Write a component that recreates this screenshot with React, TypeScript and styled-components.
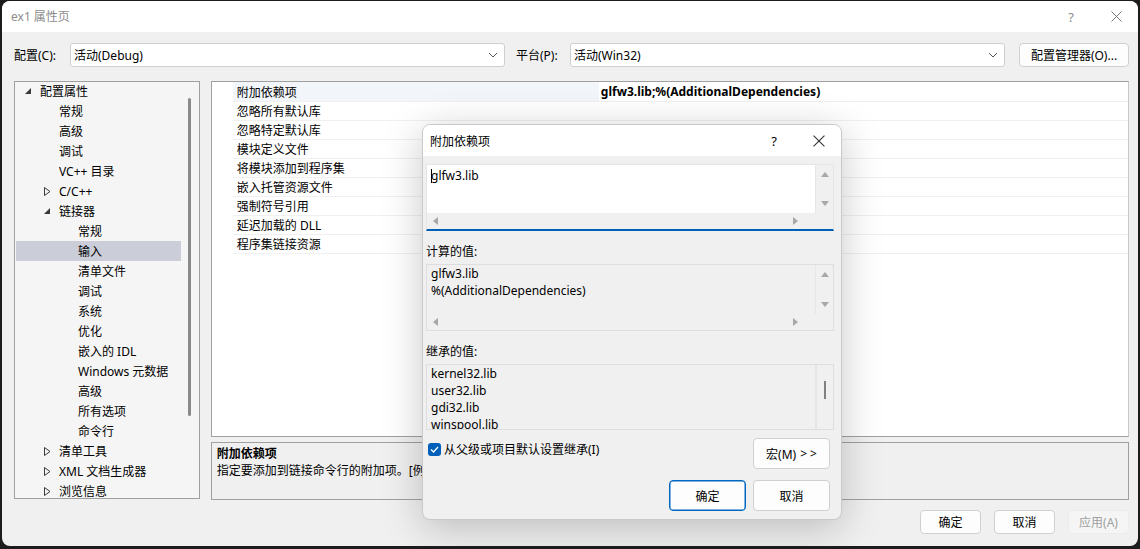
import React from "react";
import styled, { createGlobalStyle, css } from "styled-components";

const Global = createGlobalStyle`
  html, body { margin: 0; padding: 0; background: #1c1c1c; }
  body { font-family: "Segoe UI", "Noto Sans", "Noto Sans CJK SC", sans-serif; font-size: 12px; color: #000; overflow: hidden; }
  #root { width: 1140px; height: 549px; }
  * { box-sizing: border-box; }
`;

const Window = styled.div`
  position: relative;
  margin: 1px 0 0 2px;
  width: 1136px;
  height: 545px;
  background: #f0f0f0;
  border-radius: 8px;
  overflow: hidden;
  display: flex;
  flex-direction: column;
`;

const TitleBar = styled.div`
  height: 31px;
  background: #fff;
  display: flex;
  align-items: center;
  padding-left: 9px;
  flex-shrink: 0;
`;

const TitleText = styled.div`
  color: #8c8c8c;
  font-size: 12px;
  flex: 1;
  margin-top: -1px;
`;

const TitleBtn = styled.div<{ $w: number }>`
  width: ${(p) => p.$w}px;
  height: 31px;
  display: flex;
  align-items: center;
  justify-content: center;
  color: #8c8c8c;
  font-size: 13px;
`;

const Body = styled.div`
  flex: 1;
  display: flex;
  flex-direction: column;
  padding: 11px 9px 0 12px;
`;

const ConfigRow = styled.div`
  display: flex;
  align-items: center;
  height: 24px;
`;

const Label = styled.div<{ $w: number; $pl?: number }>`
  width: ${(p) => p.$w}px;
  padding-left: ${(p) => p.$pl ?? 0}px;
  flex-shrink: 0;
`;

const Select = styled.div<{ $w: number }>`
  width: ${(p) => p.$w}px;
  height: 24px;
  background: #fff;
  border: 1px solid #cfcfcf;
  border-radius: 3px;
  display: flex;
  align-items: center;
  padding-left: 3px;
  justify-content: space-between;
  padding-right: 6px;
  flex-shrink: 0;
`;

const Spacer = styled.div<{ $w: number }>`
  width: ${(p) => p.$w}px;
  flex-shrink: 0;
`;

const Button = styled.div<{ $w: number; $h?: number; $primary?: boolean; $disabled?: boolean }>`
  width: ${(p) => p.$w}px;
  height: ${(p) => p.$h ?? 24}px;
  background: ${(p) => (p.$disabled ? "#f5f5f5" : "#fdfdfd")};
  border: 1px solid ${(p) => (p.$disabled ? "#ececec" : "#d0d0d0")};
  border-radius: 4px;
  display: flex;
  align-items: center;
  justify-content: center;
  color: ${(p) => (p.$disabled ? "#a0a0a0" : "#000")};
  flex-shrink: 0;
  ${(p) =>
    p.$primary &&
    css`
      border: 1px solid #0067c0;
      box-shadow: inset 0 0 0 0.5px #0067c0;
    `}
`;

const Arrows = styled.span`
  letter-spacing: 3px;
  margin-left: 4px;
  margin-right: -3px;
`;

const Main = styled.div`
  display: flex;
  margin-top: 14px;
  gap: 11px;
`;

const TreePanel = styled.div`
  width: 186px;
  height: 418px;
  border: 1px solid #a0a0a0;
  background: #f5f5f5;
  display: flex;
  overflow: hidden;
`;

const TreeList = styled.div`
  flex: 1;
  margin-top: -1px;
  display: flex;
  flex-direction: column;
  padding-left: 1px;
`;

const TreeRow = styled.div<{ $level: number; $selected?: boolean }>`
  height: 20px;
  flex-shrink: 0;
  display: flex;
  align-items: center;
  padding-left: ${(p) => 12 + p.$level * 19}px;
  background: ${(p) => (p.$selected ? "#cbcdd9" : "transparent")};
`;

const Expander = styled.span`
  width: 15px;
  display: inline-flex;
  align-items: center;
  justify-content: flex-start;
  flex-shrink: 0;
  margin-left: -3px;
`;

const TreeScroll = styled.div`
  width: 18px;
  display: flex;
  justify-content: center;
  padding-top: 16px;
`;

const TreeThumb = styled.div`
  width: 3px;
  height: 318px;
  background: #8a8a8a;
  border-radius: 2px;
`;

const RightCol = styled.div`
  width: 919px;
  display: flex;
  flex-direction: column;
  gap: 5px;
`;

const Grid = styled.div`
  height: 356px;
  border: 1px solid #a0a0a0;
  border-right-color: #c8c8c8;
  background: #fff;
  display: flex;
  flex-direction: column;
  padding-left: 21px;
`;

const GridRow = styled.div<{ $first?: boolean }>`
  height: ${(p) => (p.$first ? 20 : 19)}px;
  flex-shrink: 0;
  display: flex;
  border-bottom: 1px solid #f0f0f0;
`;

const NameCell = styled.div<{ $active?: boolean }>`
  width: 366px;
  padding-left: 4px;
  display: flex;
  align-items: center;
  background: ${(p) => (p.$active ? "#f2f5fa" : "transparent")};
`;

const ValueCell = styled.div`
  flex: 1;
  padding-left: 2px;
  display: flex;
  align-items: center;
  font-weight: bold;
`;

const Desc = styled.div`
  height: 58px;
  border: 1px solid #a0a0a0;
  padding: 2px 5px;
  line-height: 17px;
`;

const DescTitle = styled.div`
  font-weight: bold;
`;

const Footer = styled.div`
  display: flex;
  justify-content: flex-end;
  gap: 13px;
  margin-top: 10px;
`;

/* Modal */
const Modal = styled.div`
  position: absolute;
  left: 420px;
  top: 123px;
  width: 420px;
  height: 396px;
  background: #f0f0f0;
  border: 1px solid #c9c9c9;
  border-radius: 8px;
  box-shadow: 0 8px 40px rgba(0, 0, 0, 0.22);
  overflow: hidden;
  display: flex;
  flex-direction: column;
`;

const ModalTitle = styled.div`
  height: 31px;
  background: #fff;
  display: flex;
  align-items: center;
  padding-left: 7px;
  flex-shrink: 0;
`;

const ModalTitleText = styled.div`
  flex: 1;
`;

const ModalTitleBtn = styled.div<{ $w: number }>`
  width: ${(p) => p.$w}px;
  height: 31px;
  display: flex;
  align-items: center;
  justify-content: center;
  font-size: 13px;
`;

const ModalBody = styled.div`
  padding: 8px 7px 0 3px;
  display: flex;
  flex-direction: column;
`;

const TextBox = styled.div<{ $edit?: boolean }>`
  height: 67px;
  flex-shrink: 0;
  border: 1px solid ${(p) => (p.$edit ? "#e5e5e5" : "#dedede")};
  ${(p) =>
    p.$edit &&
    css`
      border-bottom: 2px solid #005fb8;
    `}
  background: ${(p) => (p.$edit ? "#fff" : "#f0f0f0")};
  display: grid;
  grid-template-columns: 1fr 17px;
  grid-template-rows: 1fr 16px;
`;

const TextArea = styled.div<{ $bg: string; $pt: number }>`
  background: ${(p) => p.$bg};
  padding: ${(p) => p.$pt}px 4px 0;
  line-height: 17px;
  overflow: hidden;
  border-right: 1px solid #e6e6e6;
  flex: 1;
`;

const VScroll = styled.div`
  display: flex;
  flex-direction: column;
  align-items: center;
  justify-content: space-between;
  padding: 6px 0 5px;
  background: #f0f0f0;
`;

const HScroll = styled.div`
  display: flex;
  align-items: center;
  justify-content: space-between;
  padding: 0 16px 0 5px;
  background: #f0f0f0;
`;

const Corner = styled.div`
  background: #f0f0f0;
`;

const SectionLabel = styled.div`
  margin-top: 10px;
  margin-bottom: 3px;
  height: 20px;
  display: flex;
  align-items: center;
`;

const InheritBox = styled.div`
  height: 66px;
  flex-shrink: 0;
  border: 1px solid #dedede;
  display: flex;
  background: #f0f0f0;
`;

const InheritScroll = styled.div`
  width: 17px;
  border-left: 1px solid #e6e6e6;
  display: flex;
  justify-content: center;
  padding-top: 16px;
`;

const InheritThumb = styled.div`
  width: 2px;
  height: 18px;
  background: #808080;
`;

const CheckRow = styled.div`
  display: flex;
  justify-content: space-between;
  align-items: flex-start;
  margin-top: 8px;
  padding-right: 4px;
`;

const CheckLabel = styled.div`
  display: flex;
  align-items: center;
  gap: 3px;
  height: 22px;
  padding-left: 2px;
`;

const CheckBox = styled.div`
  width: 13px;
  height: 13px;
  border-radius: 3px;
  background: #005fb8;
  display: flex;
  align-items: center;
  justify-content: center;
`;

const ModalButtons = styled.div`
  display: flex;
  justify-content: flex-end;
  gap: 7px;
  margin-top: 11px;
  padding-right: 4px;
`;

const Tri = ({ dir, color = "#a8a8a8" }: { dir: "up" | "down" | "left" | "right"; color?: string }) => {
  const pts = {
    up: "0,6 4,1 8,6",
    down: "0,1 8,1 4,6",
    left: "6,0 6,8 1,4",
    right: "1,0 1,8 6,4",
  }[dir];
  return (
    <svg width="8" height="8" viewBox="0 0 8 8">
      <polygon points={pts} fill={color} />
    </svg>
  );
};

const Chevron = () => (
  <svg width="10" height="6" viewBox="0 0 10 6">
    <polyline points="1,1 5,5 9,1" fill="none" stroke="#555" strokeWidth="1" />
  </svg>
);

const CloseX = ({ size = 11, color = "#555" }: { size?: number; color?: string }) => (
  <svg width={size} height={size} viewBox="0 0 11 11">
    <path d="M0.5 0.5 L10.5 10.5 M10.5 0.5 L0.5 10.5" stroke={color} strokeWidth="1" />
  </svg>
);

const ExpandedTri = () => (
  <svg width="7" height="7" viewBox="0 0 7 7">
    <polygon points="6,0 6,6 0,6" fill="#3a3a3a" />
  </svg>
);

const CollapsedTri = () => (
  <svg width="7" height="9" viewBox="0 0 7 9">
    <polygon points="0.5,0.5 0.5,8.5 6,4.5" fill="none" stroke="#3a3a3a" strokeWidth="1" />
  </svg>
);

type TreeItem = { text: string; level: number; exp?: "open" | "closed"; sel?: boolean };

const tree: TreeItem[] = [
  { text: "配置属性", level: 0, exp: "open" },
  { text: "常规", level: 1 },
  { text: "高级", level: 1 },
  { text: "调试", level: 1 },
  { text: "VC++ 目录", level: 1 },
  { text: "C/C++", level: 1, exp: "closed" },
  { text: "链接器", level: 1, exp: "open" },
  { text: "常规", level: 2 },
  { text: "输入", level: 2, sel: true },
  { text: "清单文件", level: 2 },
  { text: "调试", level: 2 },
  { text: "系统", level: 2 },
  { text: "优化", level: 2 },
  { text: "嵌入的 IDL", level: 2 },
  { text: "Windows 元数据", level: 2 },
  { text: "高级", level: 2 },
  { text: "所有选项", level: 2 },
  { text: "命令行", level: 2 },
  { text: "清单工具", level: 1, exp: "closed" },
  { text: "XML 文档生成器", level: 1, exp: "closed" },
  { text: "浏览信息", level: 1, exp: "closed" },
];

const props = [
  "附加依赖项",
  "忽略所有默认库",
  "忽略特定默认库",
  "模块定义文件",
  "将模块添加到程序集",
  "嵌入托管资源文件",
  "强制符号引用",
  "延迟加载的 DLL",
  "程序集链接资源",
];

const Caret = styled.span`
  display: inline-block;
  width: 1px;
  height: 14px;
  background: #000;
  vertical-align: -3px;
  margin-right: -1px;
`;

export default function App() {
  return (
    <>
      <Global />
      <Window>
        <TitleBar>
          <TitleText>ex1 属性页</TitleText>
          <TitleBtn $w={46}>?</TitleBtn>
          <TitleBtn $w={44}>
            <CloseX color="#777" />
          </TitleBtn>
        </TitleBar>
        <Body>
          <ConfigRow>
            <Label $w={56}>配置(C):</Label>
            <Select $w={435}>
              <span>活动(Debug)</span>
              <Chevron />
            </Select>
            <Label $w={65} $pl={11}>平台(P):</Label>
            <Select $w={435}>
              <span>活动(Win32)</span>
              <Chevron />
            </Select>
            <Spacer $w={14} />
            <Button $w={110}>配置管理器(O)...</Button>
          </ConfigRow>
          <Main>
            <TreePanel>
              <TreeList>
                {tree.map((t, i) => (
                  <TreeRow key={i} $level={t.level} $selected={t.sel}>
                    <Expander>
                      {t.exp === "open" ? <ExpandedTri /> : t.exp === "closed" ? <CollapsedTri /> : null}
                    </Expander>
                    {t.text}
                  </TreeRow>
                ))}
              </TreeList>
              <TreeScroll>
                <TreeThumb />
              </TreeScroll>
            </TreePanel>
            <RightCol>
              <Grid>
                {props.map((p, i) => (
                  <GridRow key={i} $first={i === 0}>
                    <NameCell $active={i === 0}>{p}</NameCell>
                    <ValueCell>{i === 0 ? "glfw3.lib;%(AdditionalDependencies)" : ""}</ValueCell>
                  </GridRow>
                ))}
              </Grid>
              <Desc>
                <DescTitle>附加依赖项</DescTitle>
                <div>指定要添加到链接命令行的附加项。[例如 kernel32.lib]</div>
              </Desc>
            </RightCol>
          </Main>
          <Footer>
            <Button $w={61}>确定</Button>
            <Button $w={61}>取消</Button>
            <Button $w={61} $disabled>应用(A)</Button>
          </Footer>
        </Body>

        <Modal>
          <ModalTitle>
            <ModalTitleText>附加依赖项</ModalTitleText>
            <ModalTitleBtn $w={46}>?</ModalTitleBtn>
            <ModalTitleBtn $w={44}>
              <CloseX size={12} color="#333" />
            </ModalTitleBtn>
          </ModalTitle>
          <ModalBody>
            <TextBox $edit>
              <TextArea $bg="#fff" $pt={2}>
                <Caret />
                glfw3.lib
              </TextArea>
              <VScroll>
                <Tri dir="up" />
                <Tri dir="down" />
              </VScroll>
              <HScroll>
                <Tri dir="left" />
                <Tri dir="right" />
              </HScroll>
              <Corner />
            </TextBox>
            <SectionLabel>计算的值:</SectionLabel>
            <TextBox>
              <TextArea $bg="#f0f0f0" $pt={0}>
                <div>glfw3.lib</div>
                <div>%(AdditionalDependencies)</div>
              </TextArea>
              <VScroll>
                <Tri dir="up" />
                <Tri dir="down" />
              </VScroll>
              <HScroll>
                <Tri dir="left" />
                <Tri dir="right" />
              </HScroll>
              <Corner />
            </TextBox>
            <SectionLabel>继承的值:</SectionLabel>
            <InheritBox>
              <TextArea $bg="#f0f0f0" $pt={0}>
                <div>kernel32.lib</div>
                <div>user32.lib</div>
                <div>gdi32.lib</div>
                <div>winspool.lib</div>
              </TextArea>
              <InheritScroll>
                <InheritThumb />
              </InheritScroll>
            </InheritBox>
            <CheckRow>
              <CheckLabel>
                <CheckBox>
                  <svg width="9" height="7" viewBox="0 0 9 7">
                    <polyline points="1,3.5 3.5,6 8,1" fill="none" stroke="#fff" strokeWidth="1.3" />
                  </svg>
                </CheckBox>
                从父级或项目默认设置继承(I)
              </CheckLabel>
              <Button $w={77} $h={31}>
                宏(M)<Arrows>&gt;&gt;</Arrows>
              </Button>
            </CheckRow>
            <ModalButtons>
              <Button $w={77} $h={31} $primary>
                确定
              </Button>
              <Button $w={77} $h={31}>
                取消
              </Button>
            </ModalButtons>
          </ModalBody>
        </Modal>
      </Window>
    </>
  );
}
